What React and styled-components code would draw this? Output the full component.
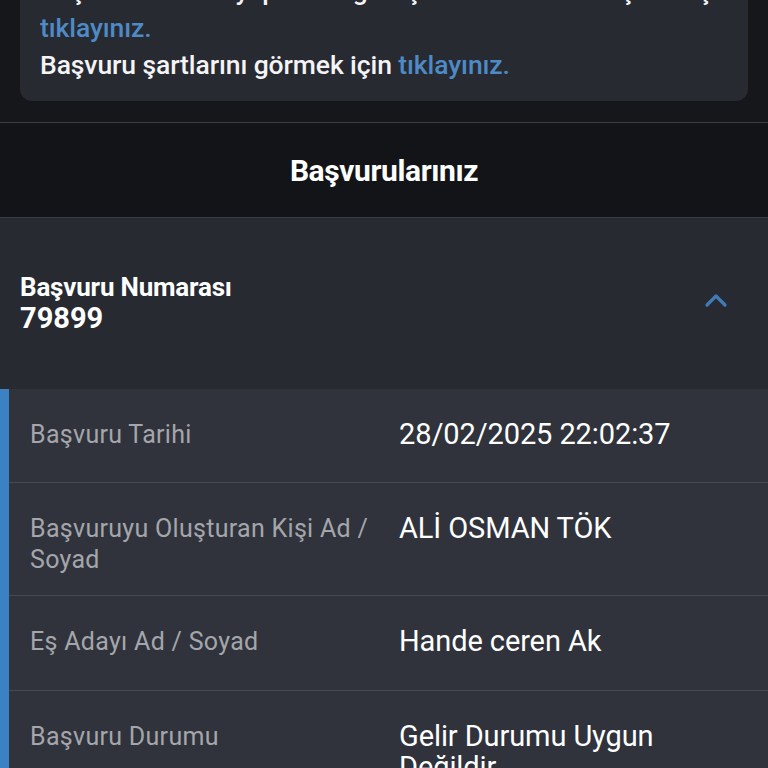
import React from "react";
import styled, { createGlobalStyle } from "styled-components";

const Global = createGlobalStyle`
  html, body { margin: 0; padding: 0; background: #16171b; }
  body { font-family: Roboto, "Noto Sans", sans-serif; overflow: hidden; }
  * { box-sizing: border-box; }
`;

const Page = styled.div`
  width: 768px;
  height: 768px;
  overflow: hidden;
  background: #16171b;
  display: flex;
  flex-direction: column;
  & > * { flex-shrink: 0; }
`;

const InfoWrap = styled.div`
  padding: 0 20px 21px 20px;
  margin-top: -28px;
`;

const InfoCard = styled.div`
  background: #272a31;
  border-radius: 12px;
  padding: 0 20px 18px 20px;
  color: #f4f4f6;
  font-size: 26.5px;
  line-height: 37px;
  font-weight: 500;
  letter-spacing: -0.1px;
`;

const Line = styled.div`
  white-space: nowrap;
  overflow: hidden;
`;

const Link = styled.span`
  color: #4e8bc6;
`;

const Title = styled.div`
  border-top: 1px solid #3a3d44;
  border-bottom: 1px solid #3a3d44;
  background: #131418;
  height: 96px;
  display: flex;
  align-items: center;
  justify-content: center;
  color: #ffffff;
  font-size: 30px;
  font-weight: 700;
  letter-spacing: -0.4px;
`;

const AccHeader = styled.div`
  background: #272a31;
  height: 171px;
  padding: 0 20px;
  display: flex;
  align-items: center;
  justify-content: space-between;
`;

const AccTitle = styled.div`
  color: #ffffff;
  display: flex;
  flex-direction: column;
  margin-top: -2px;
`;

const Label = styled.div`
  font-size: 26px;
  font-weight: 700;
  line-height: 31px;
  letter-spacing: -0.2px;
`;

const Num = styled.div`
  font-size: 29px;
  font-weight: 700;
  line-height: 31px;
`;

const Chevron = styled.svg`
  margin-right: 19px;
  margin-top: -7px;
`;

const Details = styled.div`
  border-left: 9px solid #3b82c4;
  background: #30333b;
  display: flex;
  flex-direction: column;
`;

const Row = styled.div`
  display: grid;
  grid-template-columns: 390px 1fr;
  padding: 30px 20px 0 0;
  border-bottom: 1px solid #464950;
  min-height: ${(p) => p.$h}px;
  align-items: start;
`;

const Key = styled.div`
  padding-left: 21px;
  padding-right: 14px;
  color: #a4a6ab;
  font-size: 25px;
  line-height: 31px;
  letter-spacing: 0.3px;
`;

const Val = styled.div`
  color: #ffffff;
  font-size: 29px;
  line-height: 31px;
  letter-spacing: -0.1px;
`;

const rows = [
  { k: "Başvuru Tarihi", v: "28/02/2025 22:02:37", h: 94 },
  { k: "Başvuruyu Oluşturan Kişi Ad / Soyad", v: "ALİ OSMAN TÖK", h: 113 },
  { k: "Eş Adayı Ad / Soyad", v: "Hande ceren Ak", h: 95 },
  { k: "Başvuru Durumu", v: "Gelir Durumu Uygun Değildir", h: 120 },
];

export default function App() {
  return (
    <Page>
      <Global />
      <InfoWrap>
        <InfoCard>
          <Line>Başvuru sonrası yapılacak görüşme takvimine ulaşmak için</Line>
          <Line>
            <Link>tıklayınız.</Link>
          </Line>
          <Line>
            Başvuru şartlarını görmek için <Link>tıklayınız.</Link>
          </Line>
        </InfoCard>
      </InfoWrap>
      <Title>Başvurularınız</Title>
      <AccHeader>
        <AccTitle>
          <Label>Başvuru Numarası</Label>
          <Num>79899</Num>
        </AccTitle>
        <Chevron width="26" height="16" viewBox="0 0 26 16" fill="none">
          <path d="M4 13 L13 4 L22 13" stroke="#3f7bb8" strokeWidth="3.2" strokeLinecap="round" strokeLinejoin="round" />
        </Chevron>
      </AccHeader>
      <Details>
        {rows.map((r, i) => (
          <Row key={i} $h={r.h}>
            <Key>{r.k}</Key>
            <Val>{r.v}</Val>
          </Row>
        ))}
      </Details>
    </Page>
  );
}
